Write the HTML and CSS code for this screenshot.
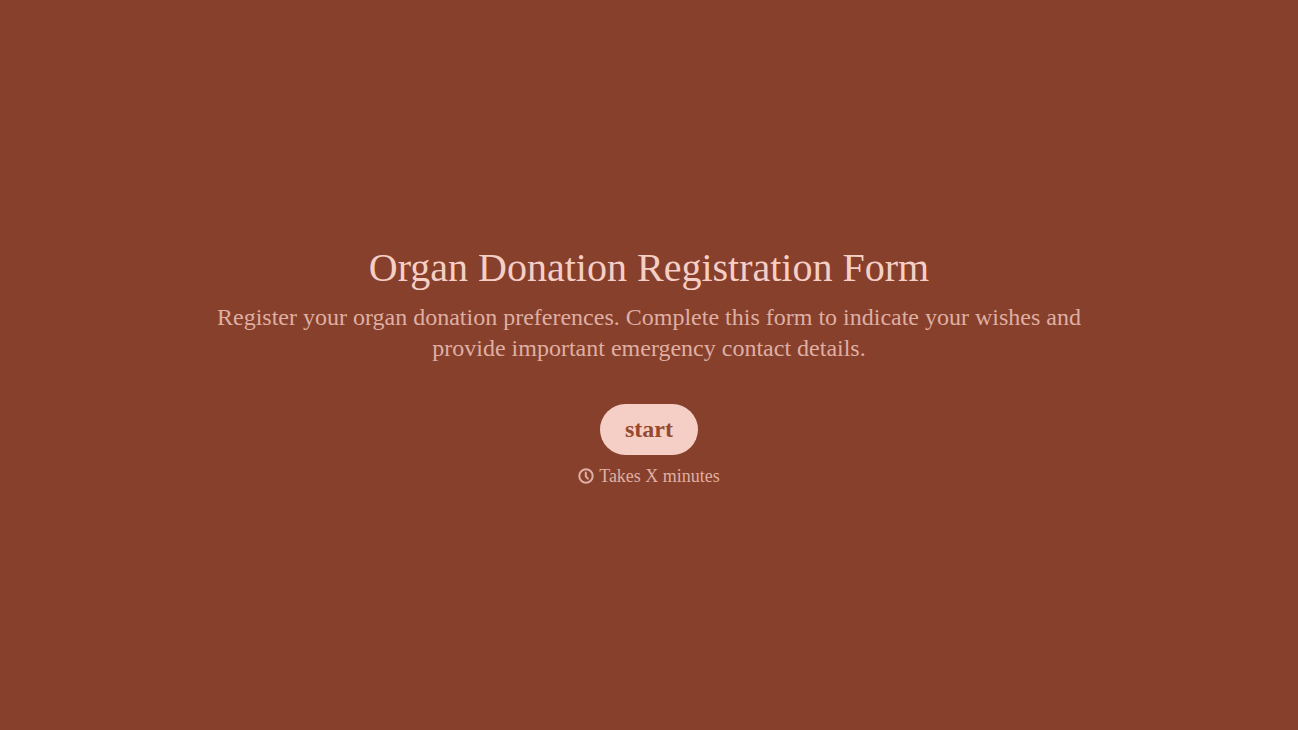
FILE: index.html
```
<!doctype html>
<html lang="en">
  <head>
    <meta charset="utf-8"/>
    <meta name="viewport" content="width=device-width, initial-scale=1"/>
    <title>Organ Donation Registration Form</title>
    <link rel="stylesheet" href="styles.css">
  </head>
  <body>
    <main class="welcome">
      <h1 class="welcome-title">Organ Donation Registration Form</h1>
      <p class="welcome-text">Register your organ donation preferences. Complete this form to indicate your wishes and provide important emergency contact details.</p>
      <button type="button" class="start-btn">start</button>
      <p class="duration">
        <svg class="clock" viewBox="0 0 16 16" aria-hidden="true">
          <circle cx="8" cy="8" r="6.7"/>
          <path d="M7.8 4.4v3.9l2 2.4"/>
        </svg>
        <span>Takes X minutes</span>
      </p>
    </main>
  </body>
</html>
```
FILE: styles.css
```
body {
  margin: 0;
  background-color: #87402c;
  color: #f5cfc6;
  font-family: "Liberation Serif", "Times New Roman", serif;
}

/* welcome screen, centered in the window */
.welcome {
  display: flex;
  flex-direction: column;
  align-items: center;
  justify-content: center;
  box-sizing: border-box;
  min-height: 100vh;
  padding: 20px 20px 22px;
  text-align: center;
}

.welcome-title {
  margin: 0;
  font-size: 40px;
  font-weight: 400;
  line-height: 54px;
}

.welcome-text {
  max-width: 880px;
  margin: 7px 0 40px;
  color: #dfafa3;
  font-size: 24px;
  line-height: 31px;
}

.start-btn {
  padding: 10px 25px;
  border: none;
  border-radius: 26px;
  background-color: #f5cfc6;
  color: #96492f;
  font-family: inherit;
  font-size: 24px;
  font-weight: 700;
  line-height: 31px;
  cursor: pointer;
}

/* time estimate */
.duration {
  display: flex;
  align-items: center;
  gap: 5px;
  margin: 10px 0 0;
  color: #dfafa3;
  font-size: 18px;
  line-height: 22px;
}

.clock {
  width: 16px;
  height: 16px;
  fill: none;
  stroke: currentColor;
  stroke-width: 2;
  stroke-linecap: round;
  stroke-linejoin: round;
}
```
